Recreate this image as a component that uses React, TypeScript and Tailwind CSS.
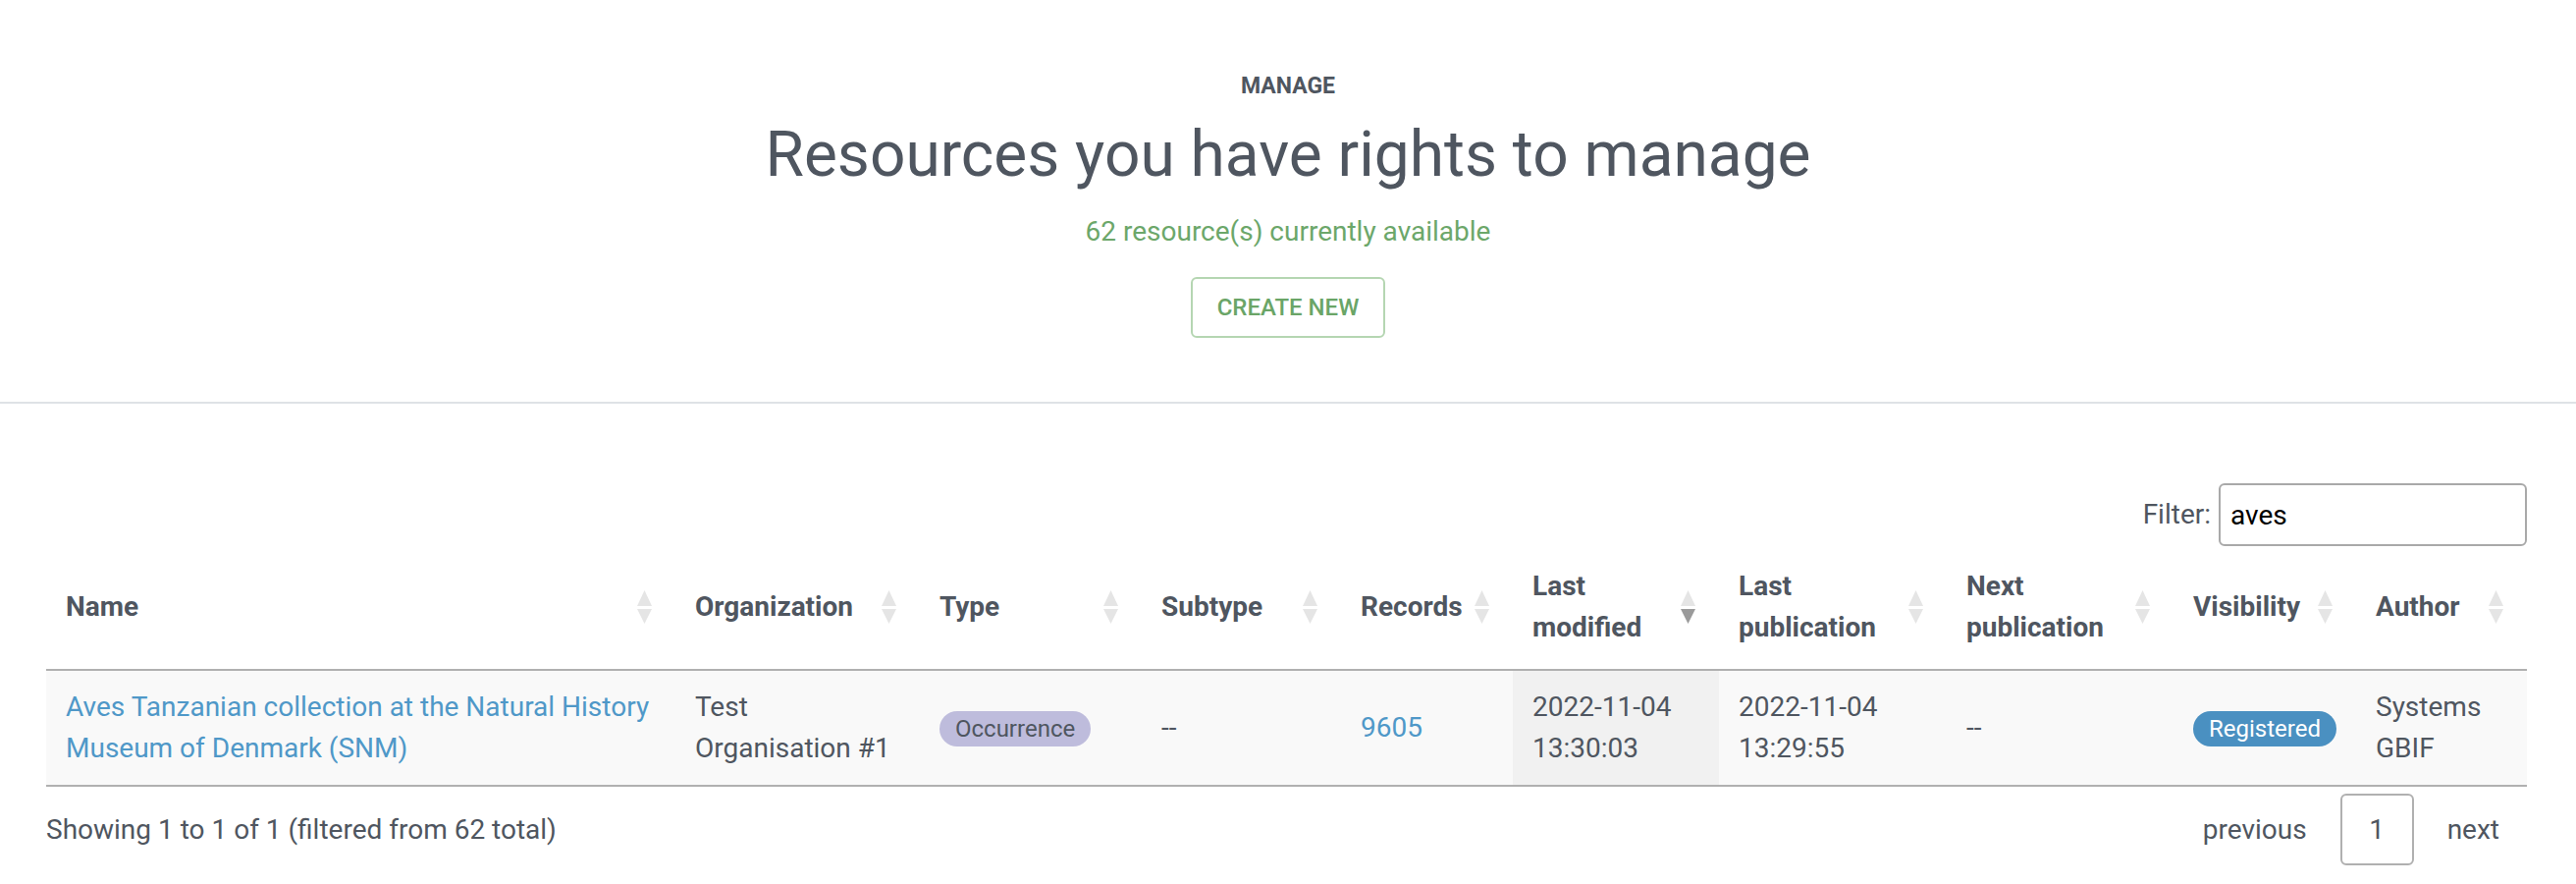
import React from 'react';

function SortIcon({ active }: { active?: boolean }) {
  return (
    <svg width="15" height="34" viewBox="0 0 15 34" className="shrink-0 block">
      <polygon points="7.5,0 15,16 0,16" fill="#e5e5e5" />
      <polygon points="0,19 15,19 7.5,34" fill={active ? '#9a9a9a' : '#e5e5e5'} />
    </svg>
  );
}

const headers: { w: string; lines: string[]; active?: boolean }[] = [
  { w: 'w-[641px]', lines: ['Name'] },
  { w: 'w-[249px]', lines: ['Organization'] },
  { w: 'w-[226px]', lines: ['Type'] },
  { w: 'w-[203px]', lines: ['Subtype'] },
  { w: 'w-[175px]', lines: ['Records'] },
  { w: 'w-[210px]', lines: ['Last', 'modified'], active: true },
  { w: 'w-[232px]', lines: ['Last', 'publication'] },
  { w: 'w-[231px]', lines: ['Next', 'publication'] },
  { w: 'w-[186px]', lines: ['Visibility'] },
  { w: 'w-[174px]', lines: ['Author'] },
];

const td = 'py-[16px] px-[20px] border-b-2 border-[#b0b0b0] align-middle leading-[42px] whitespace-nowrap';

export default function App() {
  return (
    <div className="min-h-[900px] bg-white font-['Roboto',sans-serif] text-[28px] text-[#4f5660]">
      <div className="flex flex-col items-center pt-[74px] pb-[65px] border-b-2 border-[#dee2e6]">
        <div className="text-[23px] leading-[28px] font-bold uppercase">Manage</div>
        <h1 className="mt-[18px] text-[64px] leading-[76px] font-normal">Resources you have rights to manage</h1>
        <div className="mt-[19px] text-[28px] leading-[42px] text-[#6ca76a]">62 resource(s) currently available</div>
        <button className="mt-[25px] h-[62px] px-[25px] border-2 border-[#b5d6b2] rounded-[6px] text-[24px] font-medium text-[#6aa567] uppercase">
          Create new
        </button>
      </div>

      <div className="pl-[47px] pr-[50px]">
        <div className="mt-[81px] flex justify-end items-center gap-[8px]">
          <label className="leading-[42px]">Filter:</label>
          <input
            readOnly
            value="aves"
            className="w-[314px] h-[64px] border-2 border-[#a9a9a9] rounded-[6px] pl-[10px] text-[28px] text-black outline-none"
          />
        </div>

        <table className="w-[2527px] table-fixed border-separate border-spacing-0">
          <colgroup>
            {headers.map((h, i) => (
              <col key={i} className={h.w} />
            ))}
          </colgroup>
          <thead>
            <tr>
              {headers.map((h, i) => (
                <th
                  key={i}
                  className="pt-[20px] pb-[21px] pl-[20px] pr-[24px] border-b-2 border-[#b0b0b0] text-left align-middle font-bold"
                >
                  <div className="flex items-center justify-between">
                    <span className="leading-[42px] whitespace-nowrap">
                      {h.lines.map((l, j) => (
                        <React.Fragment key={j}>
                          {j > 0 && <br />}
                          {l}
                        </React.Fragment>
                      ))}
                    </span>
                    <SortIcon active={h.active} />
                  </div>
                </th>
              ))}
            </tr>
          </thead>
          <tbody>
            <tr className="bg-[#f9f9f9]">
              <td className={td}>
                <a className="text-[#4f98c8]">
                  Aves Tanzanian collection at the Natural History
                  <br />
                  Museum of Denmark (SNM)
                </a>
              </td>
              <td className={td}>
                Test
                <br />
                Organisation #1
              </td>
              <td className={td}>
                <span className="inline-block rounded-full bg-[#bebcdc] px-[16px] text-[24px] leading-[36px] text-[#4f5660]">
                  Occurrence
                </span>
              </td>
              <td className={td}>--</td>
              <td className={td}>
                <a className="text-[#4f98c8]">9605</a>
              </td>
              <td className={`${td} bg-[#f1f1f1]`}>
                2022-11-04
                <br />
                13:30:03
              </td>
              <td className={td}>
                2022-11-04
                <br />
                13:29:55
              </td>
              <td className={td}>--</td>
              <td className={td}>
                <span className="inline-block rounded-full bg-[#4a90c1] px-[16px] text-[24px] leading-[36px] text-white">
                  Registered
                </span>
              </td>
              <td className={td}>
                Systems
                <br />
                GBIF
              </td>
            </tr>
          </tbody>
        </table>

        <div className="mt-[7px] flex items-center justify-between">
          <div className="leading-[42px]">Showing 1 to 1 of 1 (filtered from 62 total)</div>
          <div className="flex items-center gap-[6px]">
            <span className="px-[28px] leading-[42px]">previous</span>
            <span className="w-[75px] h-[73px] border-2 border-[#b0b0b0] rounded-[6px] flex items-center justify-center">
              1
            </span>
            <span className="px-[28px] leading-[42px]">next</span>
          </div>
        </div>
      </div>
    </div>
  );
}
